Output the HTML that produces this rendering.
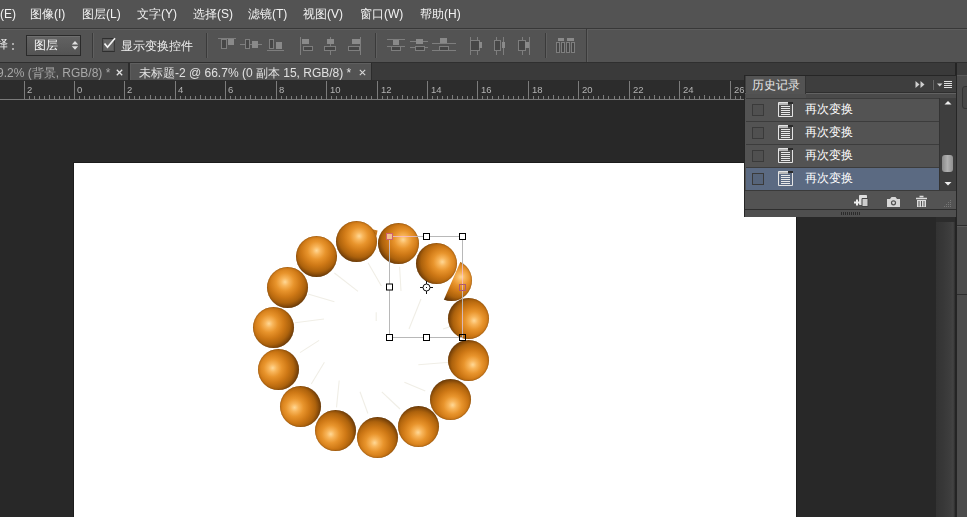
<!DOCTYPE html>
<html><head><meta charset="utf-8">
<style>
*{margin:0;padding:0;box-sizing:border-box}
html,body{width:967px;height:517px;overflow:hidden;background:#282828;font-family:"Liberation Sans",sans-serif;font-size:12px;position:relative}
.a{position:absolute}
.mt{position:absolute;top:6px;color:#f2f2f2;font-size:12px;line-height:16px;white-space:nowrap}
.sp{position:absolute;border-radius:50%;box-shadow:inset 0 0 1.5px 0.5px rgba(100,55,10,.55)}
.h{position:absolute;width:7px;height:7px;border:1px solid #000;background:#fff}
</style></head><body>
<!-- menu bar -->
<div class="a" style="left:0;top:0;width:967px;height:28px;background:#535353"></div>
<div class="a" style="left:0;top:28px;width:967px;height:1px;background:#383838"></div>
<div class="mt" style="left:0">(E)</div>
<div class="mt" style="left:30px">图像(I)</div>
<div class="mt" style="left:82px">图层(L)</div>
<div class="mt" style="left:137px">文字(Y)</div>
<div class="mt" style="left:193px">选择(S)</div>
<div class="mt" style="left:248px">滤镜(T)</div>
<div class="mt" style="left:303px">视图(V)</div>
<div class="mt" style="left:360px">窗口(W)</div>
<div class="mt" style="left:420px">帮助(H)</div>
<!-- options bar -->
<div class="a" style="left:0;top:29px;width:967px;height:33px;background:#535353;border-top:1px solid #5e5e5e"></div>
<div class="a" style="left:0;top:62px;width:967px;height:1px;background:#2f2f2f"></div>
<!-- options content -->
<div class="a" style="left:-4px;top:36px;color:#eeeeee;line-height:16px">择</div>
<div class="a" style="left:12px;top:43px;width:2px;height:2px;background:#aaa"></div>
<div class="a" style="left:12px;top:48px;width:2px;height:2px;background:#aaa"></div>
<div class="a" style="left:26px;top:35px;width:55px;height:21px;background:linear-gradient(#626262,#545454);border:1px solid #2a2a2a;box-shadow:inset 0 1px 0 #6e6e6e"></div>
<div class="a" style="left:34px;top:37px;color:#f6f6f6;line-height:16px">图层</div>
<svg class="a" style="left:71px;top:40px" width="8" height="11"><path d="M0.8 4.6 L4 1 L7.2 4.6Z M0.8 6.2 L4 9.8 L7.2 6.2Z" fill="#e0e0e0"/></svg>
<div class="a" style="left:92px;top:33px;width:1px;height:25px;background:#3a3a3a"></div>
<div class="a" style="left:93px;top:33px;width:1px;height:25px;background:#5f5f5f"></div>
<div class="a" style="left:102px;top:38px;width:13px;height:14px;background:#646464;border:1px solid #2e2e2e;border-left-color:#3a3a3a;border-right-color:#3a3a3a;box-shadow:inset 0 0 0 1px #585858"></div>
<svg class="a" style="left:102px;top:37px" width="15" height="13"><path d="M2.5 6.5 L5.5 10.2 L13 1.2" stroke="#f4f4f4" stroke-width="1.7" fill="none"/></svg>
<div class="a" style="left:121px;top:38px;color:#f0f0f0;line-height:16px">显示变换控件</div>
<div class="a" style="left:206px;top:33px;width:1px;height:25px;background:#3a3a3a"></div>
<div class="a" style="left:207px;top:33px;width:1px;height:25px;background:#5f5f5f"></div>
<div class="a" style="left:375px;top:33px;width:1px;height:25px;background:#3a3a3a"></div>
<div class="a" style="left:376px;top:33px;width:1px;height:25px;background:#5f5f5f"></div>
<div class="a" style="left:545px;top:33px;width:1px;height:25px;background:#3a3a3a"></div>
<div class="a" style="left:546px;top:33px;width:1px;height:25px;background:#5f5f5f"></div>
<div class="a" style="left:586px;top:29px;width:1px;height:33px;background:#3a3a3a"></div>
<div class="a" style="left:587px;top:29px;width:1px;height:33px;background:#5f5f5f"></div>
<svg class="a" style="left:210px;top:30px" width="380" height="32"><g stroke="#7e7e7e" fill="none" stroke-width="1">
<!-- icon1 align top -->
<path d="M8 8.5H26"/><rect x="11.5" y="9.5" width="5" height="9" fill="#464646"/><rect x="18" y="9" width="6" height="6" fill="#8a8a8a" stroke="none"/>
<!-- icon2 align vcenter -->
<path d="M30 14.5H52"/><rect x="35.5" y="9.5" width="4" height="9" fill="#464646"/><rect x="42" y="11" width="6" height="7" fill="#8a8a8a" stroke="none"/>
<!-- icon3 align bottom -->
<path d="M57 20.5H74"/><rect x="59.5" y="9.5" width="4" height="9" fill="#464646"/><rect x="66" y="12" width="6" height="7" fill="#8a8a8a" stroke="none"/>
<!-- icon4 align left -->
<path d="M90.5 7V25"/><rect x="92" y="9" width="7" height="5" fill="#8a8a8a" stroke="none"/><rect x="93.5" y="16.5" width="9" height="4" fill="#464646"/>
<!-- icon5 align hcenter -->
<path d="M120.5 7V25"/><rect x="117" y="9" width="7" height="5" fill="#8a8a8a" stroke="none"/><rect x="114.5" y="16.5" width="11" height="4" fill="#464646"/>
<!-- icon6 align right -->
<path d="M150.5 7V25"/><rect x="142" y="9" width="8" height="5" fill="#8a8a8a" stroke="none"/><rect x="138.5" y="16.5" width="11" height="4" fill="#464646"/>
<!-- icon7 distribute top -->
<path d="M177 9.5H195M177 16.5H195"/><rect x="183" y="10" width="6" height="5" fill="#8a8a8a" stroke="none"/><rect x="181.5" y="16.5" width="9" height="4" fill="#464646"/>
<!-- icon8 distribute vcenter -->
<path d="M200 11.5H218M200 17.5H218"/><rect x="206" y="9" width="7" height="5" fill="#8a8a8a" stroke="none"/><rect x="205.5" y="16.5" width="9" height="4" fill="#464646"/>
<!-- icon9 distribute bottom -->
<path d="M222 13.5H246M222 20.5H246"/><rect x="230" y="8" width="7" height="5" fill="#8a8a8a" stroke="none"/><rect x="229.5" y="16.5" width="9" height="4" fill="#464646"/>
<!-- icon10 distribute left -->
<path d="M260.5 7V25M267.5 7V25"/><rect x="260.5" y="10.5" width="9" height="10" fill="#464646"/><rect x="269" y="12" width="3" height="6" fill="#8a8a8a" stroke="none"/>
<!-- icon11 -->
<path d="M286.5 7V25M293.5 7V25"/><rect x="284.5" y="10.5" width="6" height="10" fill="#464646"/><rect x="292" y="12" width="3" height="6" fill="#8a8a8a" stroke="none"/>
<!-- icon12 -->
<path d="M312.5 7V25M319.5 7V25"/><rect x="308.5" y="10.5" width="7" height="10" fill="#464646"/><rect x="315" y="12" width="4" height="6" fill="#8a8a8a" stroke="none"/>
<!-- icon13 auto align -->
<rect x="348" y="8" width="6" height="3" fill="#8a8a8a" stroke="none"/><rect x="357" y="8" width="7" height="3" fill="#8a8a8a" stroke="none"/><rect x="346.5" y="12.5" width="3" height="10" fill="#464646"/><rect x="351.5" y="12.5" width="3" height="10" fill="#464646"/><rect x="356.5" y="12.5" width="3" height="10" fill="#464646"/><rect x="361.5" y="12.5" width="3" height="10" fill="#464646"/>
</g></svg>
<!-- tab bar -->
<div class="a" style="left:0;top:63px;width:967px;height:17px;background:#3a3a3a"></div>
<div class="a" style="left:0;top:63px;width:128px;height:17px;background:#464646"></div><div class="a" style="left:128px;top:63px;width:2px;height:17px;background:#2c2c2c"></div>
<div class="a" style="left:130px;top:63px;width:241px;height:17px;background:#535353;border-top:1px solid #5f5f5f;border-left:1px solid #5c5c5c"></div><div class="a" style="left:371px;top:63px;width:1px;height:17px;background:#2c2c2c"></div>
<!-- tab text -->
<div class="a" style="left:-3px;top:66px;color:#a8a8a8;line-height:14px;white-space:nowrap">9.2% (背景, RGB/8) *</div>
<svg class="a" style="left:116px;top:69px" width="7" height="7"><path d="M0.8 0.8L6.2 6.2M6.2 0.8L0.8 6.2" stroke="#e0e0e0" stroke-width="1.3"/></svg>
<div class="a" style="left:139px;top:66px;color:#e0e0e0;line-height:14px;white-space:nowrap">未标题-2 @ 66.7% (0 副本 15, RGB/8) *</div>
<svg class="a" style="left:359px;top:69px" width="7" height="7"><path d="M0.8 0.8L6.2 6.2M6.2 0.8L0.8 6.2" stroke="#d8d8d8" stroke-width="1.1"/></svg>
<!-- ruler -->
<div class="a" style="left:0;top:80px;width:967px;height:19px;background:#2c2c2c"></div>
<!-- ruler svg -->
<svg class="a" style="left:0;top:0" width="935" height="101"><path d="M24.5 81V99M29.5 96V99M34.5 96V99M39.5 96V99M44.5 96V99M49.5 95V99M54.5 96V99M59.5 96V99M64.5 96V99M69.5 96V99M74.5 81V99M79.5 96V99M84.5 96V99M89.5 96V99M94.5 96V99M99.5 95V99M104.5 96V99M109.5 96V99M114.5 96V99M119.5 96V99M124.5 81V99M129.5 96V99M134.5 96V99M139.5 96V99M145.5 96V99M150.5 95V99M155.5 96V99M160.5 96V99M165.5 96V99M170.5 96V99M175.5 81V99M180.5 96V99M185.5 96V99M190.5 96V99M195.5 96V99M200.5 95V99M205.5 96V99M210.5 96V99M215.5 96V99M220.5 96V99M225.5 81V99M230.5 96V99M235.5 96V99M240.5 96V99M245.5 96V99M250.5 95V99M255.5 96V99M261.5 96V99M266.5 96V99M271.5 96V99M276.5 81V99M281.5 96V99M286.5 96V99M291.5 96V99M296.5 96V99M301.5 95V99M306.5 96V99M311.5 96V99M316.5 96V99M321.5 96V99M326.5 81V99M331.5 96V99M336.5 96V99M341.5 96V99M346.5 96V99M351.5 95V99M356.5 96V99M361.5 96V99M366.5 96V99M371.5 96V99M377.5 81V99M382.5 96V99M387.5 96V99M392.5 96V99M397.5 96V99M402.5 95V99M407.5 96V99M412.5 96V99M417.5 96V99M422.5 96V99M427.5 81V99M432.5 96V99M437.5 96V99M442.5 96V99M447.5 96V99M452.5 95V99M457.5 96V99M462.5 96V99M467.5 96V99M472.5 96V99M477.5 81V99M482.5 96V99M487.5 96V99M492.5 96V99M498.5 96V99M503.5 95V99M508.5 96V99M513.5 96V99M518.5 96V99M523.5 96V99M528.5 81V99M533.5 96V99M538.5 96V99M543.5 96V99M548.5 96V99M553.5 95V99M558.5 96V99M563.5 96V99M568.5 96V99M573.5 96V99M578.5 81V99M583.5 96V99M588.5 96V99M593.5 96V99M598.5 96V99M603.5 95V99M608.5 96V99M614.5 96V99M619.5 96V99M624.5 96V99M629.5 81V99M634.5 96V99M639.5 96V99M644.5 96V99M649.5 96V99M654.5 95V99M659.5 96V99M664.5 96V99M669.5 96V99M674.5 96V99M679.5 81V99M684.5 96V99M689.5 96V99M694.5 96V99M699.5 96V99M704.5 95V99M709.5 96V99M714.5 96V99M719.5 96V99M724.5 96V99M730.5 81V99M735.5 96V99M740.5 96V99M745.5 96V99M750.5 96V99M755.5 95V99M760.5 96V99M765.5 96V99M770.5 96V99M775.5 96V99M780.5 81V99M785.5 96V99M790.5 96V99M795.5 96V99M800.5 96V99M805.5 95V99M810.5 96V99M815.5 96V99M820.5 96V99M825.5 96V99M830.5 81V99M835.5 96V99M840.5 96V99M846.5 96V99M851.5 96V99M856.5 95V99M861.5 96V99M866.5 96V99M871.5 96V99M876.5 96V99M881.5 81V99M886.5 96V99M891.5 96V99M896.5 96V99M901.5 96V99M906.5 95V99M911.5 96V99M916.5 96V99M921.5 96V99M926.5 96V99M931.5 81V99" stroke="#7c7c7c" stroke-width="1"/><path d="M0 99.5H935" stroke="#7a7a7a"/><g font-family="Liberation Sans" font-size="9.5" fill="#b4b4b4"><text x="27.0" y="93">2</text><text x="77.0" y="93">0</text><text x="127.0" y="93">2</text><text x="178.0" y="93">4</text><text x="228.0" y="93">6</text><text x="279.0" y="93">8</text><text x="330.0" y="93">10</text><text x="381.0" y="93">12</text><text x="431.0" y="93">14</text><text x="481.0" y="93">16</text><text x="532.0" y="93">18</text><text x="582.0" y="93">20</text><text x="633.0" y="93">22</text><text x="683.0" y="93">24</text><text x="734.0" y="93">26</text><text x="784.0" y="93">28</text><text x="834.0" y="93">30</text><text x="885.0" y="93">32</text><text x="935.0" y="93">34</text></g></svg>
<!-- doc -->
<div class="a" style="left:73px;top:162px;width:724px;height:360px;background:#1c1c1c"></div>
<div class="a" style="left:74px;top:163px;width:722px;height:354px;background:#fff"></div>
<!-- rays -->
<svg class="a" style="left:250px;top:250px" width="220" height="180"><path d="M118.0 12.7L131.4 36.0M84.4 23.0L108.0 41.4M58.0 44.0L84.4 51.8M45.0 72.7L74.0 69.0M69.1 90.4L50.0 102.6M74.4 112.2L61.3 134.0M89.2 130.5L86.5 157.4M110.0 141.8L117.9 163.5M131.8 141.8L150.0 159.0M154.4 132.2L175.3 141.0M168.3 114.8L199.6 112.2M126.2 62.3L126.2 70.9M149.6 16.8L151.0 41.0M171.0 49.0L159.0 79.0M193.0 79.0L209.0 74.0" stroke="#f0eee6" stroke-width="1.1" fill="none"/></svg>
<svg class="a" style="left:380px;top:228px" width="92" height="118"><path d="M9.5 8.5H82.5V109.5H9.5Z" stroke="#a8a8a8" fill="none"/></svg>
<!-- spheres -->
<svg class="a" style="left:360px;top:215px" width="30" height="30"><path d="M11 14L17.5 15.5L16.5 21Z" fill="#c8781c"/></svg>

<div class="sp" style="left:335.8px;top:220.6px;width:41.0px;height:41.0px;background:radial-gradient(circle at 23.1px 15.1px,#ffd896 0px,#f8b55a 4px,#e8942c 9px,#cf7916 15px,#ad620c 21px,#7e460a 25px,#5a3306 28px)"></div>
<div class="sp" style="left:296.0px;top:236.3px;width:41.0px;height:41.0px;background:radial-gradient(circle at 20.6px 14.5px,#ffd896 0px,#f8b55a 4px,#e8942c 9px,#cf7916 15px,#ad620c 21px,#7e460a 25px,#5a3306 28px)"></div>
<div class="sp" style="left:266.9px;top:267.0px;width:41.0px;height:41.0px;background:radial-gradient(circle at 18.0px 15.0px,#ffd896 0px,#f8b55a 4px,#e8942c 9px,#cf7916 15px,#ad620c 21px,#7e460a 25px,#5a3306 28px)"></div>
<div class="sp" style="left:253.1px;top:307.3px;width:41.0px;height:41.0px;background:radial-gradient(circle at 15.9px 16.6px,#ffd896 0px,#f8b55a 4px,#e8942c 9px,#cf7916 15px,#ad620c 21px,#7e460a 25px,#5a3306 28px)"></div>
<div class="sp" style="left:257.7px;top:349.3px;width:41.0px;height:41.0px;background:radial-gradient(circle at 14.7px 19.0px,#ffd896 0px,#f8b55a 4px,#e8942c 9px,#cf7916 15px,#ad620c 21px,#7e460a 25px,#5a3306 28px)"></div>
<div class="sp" style="left:279.5px;top:386.1px;width:41.0px;height:41.0px;background:radial-gradient(circle at 14.6px 21.6px,#ffd896 0px,#f8b55a 4px,#e8942c 9px,#cf7916 15px,#ad620c 21px,#7e460a 25px,#5a3306 28px)"></div>
<div class="sp" style="left:314.7px;top:410.2px;width:41.0px;height:41.0px;background:radial-gradient(circle at 15.7px 24.1px,#ffd896 0px,#f8b55a 4px,#e8942c 9px,#cf7916 15px,#ad620c 21px,#7e460a 25px,#5a3306 28px)"></div>
<div class="sp" style="left:356.6px;top:416.8px;width:41.0px;height:41.0px;background:radial-gradient(circle at 17.6px 25.8px,#ffd896 0px,#f8b55a 4px,#e8942c 9px,#cf7916 15px,#ad620c 21px,#7e460a 25px,#5a3306 28px)"></div>
<div class="sp" style="left:397.6px;top:406.2px;width:41.0px;height:41.0px;background:radial-gradient(circle at 20.1px 26.5px,#ffd896 0px,#f8b55a 4px,#e8942c 9px,#cf7916 15px,#ad620c 21px,#7e460a 25px,#5a3306 28px)"></div>
<div class="sp" style="left:430.1px;top:378.5px;width:41.0px;height:41.0px;background:radial-gradient(circle at 22.6px 26.1px,#ffd896 0px,#f8b55a 4px,#e8942c 9px,#cf7916 15px,#ad620c 21px,#7e460a 25px,#5a3306 28px)"></div>
<div class="sp" style="left:448.1px;top:340.0px;width:41.0px;height:41.0px;background:radial-gradient(circle at 24.8px 24.7px,#ffd896 0px,#f8b55a 4px,#e8942c 9px,#cf7916 15px,#ad620c 21px,#7e460a 25px,#5a3306 28px)"></div>
<div class="sp" style="left:448.2px;top:297.9px;width:41.0px;height:41.0px;background:radial-gradient(circle at 26.1px 22.6px,#ffd896 0px,#f8b55a 4px,#e8942c 9px,#cf7916 15px,#ad620c 21px,#7e460a 25px,#5a3306 28px)"></div>
<div class="sp" style="left:415.8px;top:242.8px;width:41.0px;height:41.0px;background:radial-gradient(circle at 26.3px 18.9px,#ffd896 0px,#f8b55a 4px,#e8942c 9px,#cf7916 15px,#ad620c 21px,#7e460a 25px,#5a3306 28px)"></div>
<div class="sp" style="left:378.0px;top:223.0px;width:41.0px;height:41.0px;background:radial-gradient(circle at 25.1px 16.6px,#ffd896 0px,#f8b55a 4px,#e8942c 9px,#cf7916 15px,#ad620c 21px,#7e460a 25px,#5a3306 28px)"></div>
<div class="a" style="left:431.0px;top:259.5px;width:41.0px;height:41.0px;clip-path:polygon(61.3px -71.0px, 60px -20px, 60px 60px, -18.2px 111.5px)"><div class="sp" style="left:0;top:0;width:41.0px;height:41.0px;background:radial-gradient(circle at 30px 17px,#ffd896 0px,#f8b55a 4px,#e8942c 9px,#cf7916 15px,#ad620c 21px,#7e460a 25px,#5a3306 28px)"></div></div>
<svg class="a" style="left:380px;top:228px;mix-blend-mode:lighten" width="92" height="118"><path d="M9.5 8.5H82.5V109.5H9.5Z" stroke="#b8b8b8" fill="none"/></svg>
<svg class="a" style="left:380px;top:228px" width="92" height="118"><g fill="none">
<g stroke="#000" fill="#fff">
<rect x="6.5" y="5.5" width="6" height="6" fill="#f2c090" stroke="#d06070"/><rect x="43.5" y="5.5" width="6" height="6"/><rect x="79.5" y="5.5" width="6" height="6"/>
<rect x="6.5" y="56" width="6" height="6"/>
<rect x="6.5" y="106.5" width="6" height="6"/><rect x="43.5" y="106.5" width="6" height="6"/><rect x="79.5" y="106.5" width="6" height="6" fill="none"/>
</g>
<rect x="79.5" y="56.5" width="6" height="6" stroke="#b05a70" fill="none"/>
<circle cx="46.5" cy="59.5" r="3.5" stroke="#111"/><path d="M46.5 53V56M46.5 63V66M40 59.5H43M50 59.5H53" stroke="#111"/><rect x="46" y="59" width="1" height="1" fill="#111"/>
</g></svg>
<!-- right strip -->
<div class="a" style="left:936px;top:80px;width:19px;height:437px;background:linear-gradient(90deg,#333 0,#383838 40%,#3e3e3e 75%,#434343 90%,#2e2e2e 100%)"></div>
<div class="a" style="left:936px;top:217px;width:19px;height:5px;background:#2c2c2c"></div>
<div class="a" style="left:955px;top:63px;width:2px;height:454px;background:#242424"></div>
<div class="a" style="left:957px;top:63px;width:10px;height:12px;background:#3e3e3e"></div>
<div class="a" style="left:957px;top:75px;width:10px;height:442px;background:#4c4c4c;border-top:1px solid #5a5a5a"></div>
<div class="a" style="left:962px;top:86px;width:10px;height:23px;border:1px solid #333;border-radius:3px;background:#474747"></div>
<div class="a" style="left:957px;top:225px;width:10px;height:1px;background:#2e2e2e"></div>
<div class="a" style="left:957px;top:226px;width:10px;height:1px;background:#5a5a5a"></div>
<div class="a" style="left:957px;top:294px;width:10px;height:1px;background:#2e2e2e"></div>
<!-- history panel -->
<div class="a" style="left:744px;top:75px;width:213px;height:142px;background:#535353;border:1px solid #262626"></div>
<div class="a" style="left:745px;top:76px;width:211px;height:16px;background:#3e3e3e"></div>
<div class="a" style="left:745px;top:92px;width:211px;height:1px;background:#2e2e2e"></div><div class="a" style="left:745px;top:93px;width:211px;height:1px;background:#626262"></div><div class="a" style="left:745px;top:94px;width:211px;height:4px;background:#4a4a4a"></div><div class="a" style="left:746px;top:92px;width:60px;height:6px;background:#505050"></div>
<div class="a" style="left:746px;top:76px;width:60px;height:18px;background:#535353;border-right:1px solid #333"></div>
<div class="a" style="left:752px;top:77px;color:#e8e8e8;line-height:16px">历史记录</div>
<svg class="a" style="left:914px;top:80px" width="40" height="10"><path d="M1.5 1L5.5 4.5L1.5 8ZM6.5 1L10.5 4.5L6.5 8Z" fill="#cfcfcf"/><path d="M18.5 0V10" stroke="#3a3a3a"/><path d="M19.5 0V10" stroke="#666"/><path d="M23 3.5H28.5L25.75 6.5Z" fill="#cfcfcf"/><path d="M30 1.5H38M30 3.5H38M30 5.5H38M30 7.5H38" stroke="#e0e0e0"/></svg>
<div class="a" style="left:746px;top:98px;width:193px;height:23px;background:#535353;border-top:1px solid #3c3c3c"></div>
<div class="a" style="left:752px;top:104px;width:12px;height:12px;border:1px solid #3a3a3a;background:#505050"></div>
<svg class="a" style="left:777px;top:101px" width="16" height="16"><path d="M1.5 1.5H15.5V15.5H1.5Z" fill="none" stroke="#e4e4e4"/><rect x="2" y="2" width="9" height="2" fill="#b8b8b8"/><rect x="11" y="1" width="5" height="2" fill="#2a2a2a"/><path d="M4 5.5H13M4 7.5H13M4 9.5H13M4 11.5H13M4 13.5H13" stroke="#e8e8e8"/></svg>
<div class="a" style="left:805px;top:101px;color:#ffffff;line-height:16px">再次变换</div>
<div class="a" style="left:746px;top:121px;width:193px;height:23px;background:#535353;border-top:1px solid #3c3c3c"></div>
<div class="a" style="left:752px;top:127px;width:12px;height:12px;border:1px solid #3a3a3a;background:#505050"></div>
<svg class="a" style="left:777px;top:124px" width="16" height="16"><path d="M1.5 1.5H15.5V15.5H1.5Z" fill="none" stroke="#e4e4e4"/><rect x="2" y="2" width="9" height="2" fill="#b8b8b8"/><rect x="11" y="1" width="5" height="2" fill="#2a2a2a"/><path d="M4 5.5H13M4 7.5H13M4 9.5H13M4 11.5H13M4 13.5H13" stroke="#e8e8e8"/></svg>
<div class="a" style="left:805px;top:124px;color:#ffffff;line-height:16px">再次变换</div>
<div class="a" style="left:746px;top:144px;width:193px;height:23px;background:#535353;border-top:1px solid #3c3c3c"></div>
<div class="a" style="left:752px;top:150px;width:12px;height:12px;border:1px solid #3a3a3a;background:#505050"></div>
<svg class="a" style="left:777px;top:147px" width="16" height="16"><path d="M1.5 1.5H15.5V15.5H1.5Z" fill="none" stroke="#e4e4e4"/><rect x="2" y="2" width="9" height="2" fill="#b8b8b8"/><rect x="11" y="1" width="5" height="2" fill="#2a2a2a"/><path d="M4 5.5H13M4 7.5H13M4 9.5H13M4 11.5H13M4 13.5H13" stroke="#e8e8e8"/></svg>
<div class="a" style="left:805px;top:147px;color:#ffffff;line-height:16px">再次变换</div>
<div class="a" style="left:746px;top:167px;width:193px;height:23px;background:#5b6a82;border-top:1px solid #3c3c3c"></div>
<div class="a" style="left:752px;top:173px;width:12px;height:12px;border:1px solid #3a3a3a;background:#56647a"></div>
<svg class="a" style="left:777px;top:170px" width="16" height="16"><path d="M1.5 1.5H15.5V15.5H1.5Z" fill="none" stroke="#e4e4e4"/><rect x="2" y="2" width="9" height="2" fill="#b8b8b8"/><rect x="11" y="1" width="5" height="2" fill="#2a2a2a"/><path d="M4 5.5H13M4 7.5H13M4 9.5H13M4 11.5H13M4 13.5H13" stroke="#e8e8e8"/></svg>
<div class="a" style="left:805px;top:170px;color:#ffffff;line-height:16px">再次变换</div>
<div class="a" style="left:939px;top:98px;width:17px;height:92px;background:#3e3e3e;border-left:1px solid #333"></div>
<svg class="a" style="left:944px;top:100px" width="8" height="6"><path d="M0.5 4.5L4 1L7.5 4.5Z" fill="#eee"/></svg>
<div class="a" style="left:942px;top:155px;width:11px;height:17px;border-radius:3px;background:linear-gradient(90deg,#8a8a8a,#b0b0b0,#909090)"></div>
<svg class="a" style="left:944px;top:181px" width="8" height="6"><path d="M0.5 1L4 4.5L7.5 1Z" fill="#eee"/></svg>
<div class="a" style="left:745px;top:190px;width:211px;height:1px;background:#3a3a3a"></div>
<!-- footer icons -->
<svg class="a" style="left:853px;top:194px" width="17" height="14"><path d="M6.5 1.5H13.5V10.5H6.5Z" fill="#ddd" stroke="#ddd"/><path d="M1 8.5H7M4 5.5V11.5" stroke="#eee" stroke-width="2"/><path d="M9 4.5H15V12.5H9Z" fill="#ccc" stroke="#444"/></svg>
<svg class="a" style="left:886px;top:196px" width="15" height="12"><path d="M1 3H4L5.5 1H9.5L11 3H14V11H1Z" fill="#d8d8d8"/><circle cx="7.5" cy="6.8" r="2.6" fill="#535353"/><circle cx="7.5" cy="6.8" r="1.4" fill="#d8d8d8"/></svg>
<svg class="a" style="left:915px;top:195px" width="13" height="13"><path d="M4.5 1.5H8.5M1 3.5H12" stroke="#ddd" stroke-width="1.4"/><path d="M2 5H11V12H2Z" fill="#ddd"/><path d="M4 6V11.5M6.5 6V11.5M9 6V11.5" stroke="#535353"/></svg>
<svg class="a" style="left:944px;top:200px" width="9" height="8"><g fill="#777"><rect x="6" y="0" width="1" height="1"/><rect x="4" y="2" width="1" height="1"/><rect x="6" y="2" width="1" height="1"/><rect x="2" y="4" width="1" height="1"/><rect x="4" y="4" width="1" height="1"/><rect x="6" y="4" width="1" height="1"/><rect x="0" y="6" width="1" height="1"/><rect x="2" y="6" width="1" height="1"/><rect x="4" y="6" width="1" height="1"/><rect x="6" y="6" width="1" height="1"/></g></svg>
<div class="a" style="left:745px;top:209px;width:211px;height:1px;background:#2e2e2e"></div>
<div class="a" style="left:745px;top:210px;width:211px;height:7px;background:#4f4f4f"></div>
<div class="a" style="left:841px;top:212px;width:19px;height:3px;background:repeating-linear-gradient(90deg,#2a2a2a 0 1px,transparent 1px 2px)"></div>
</body></html>
